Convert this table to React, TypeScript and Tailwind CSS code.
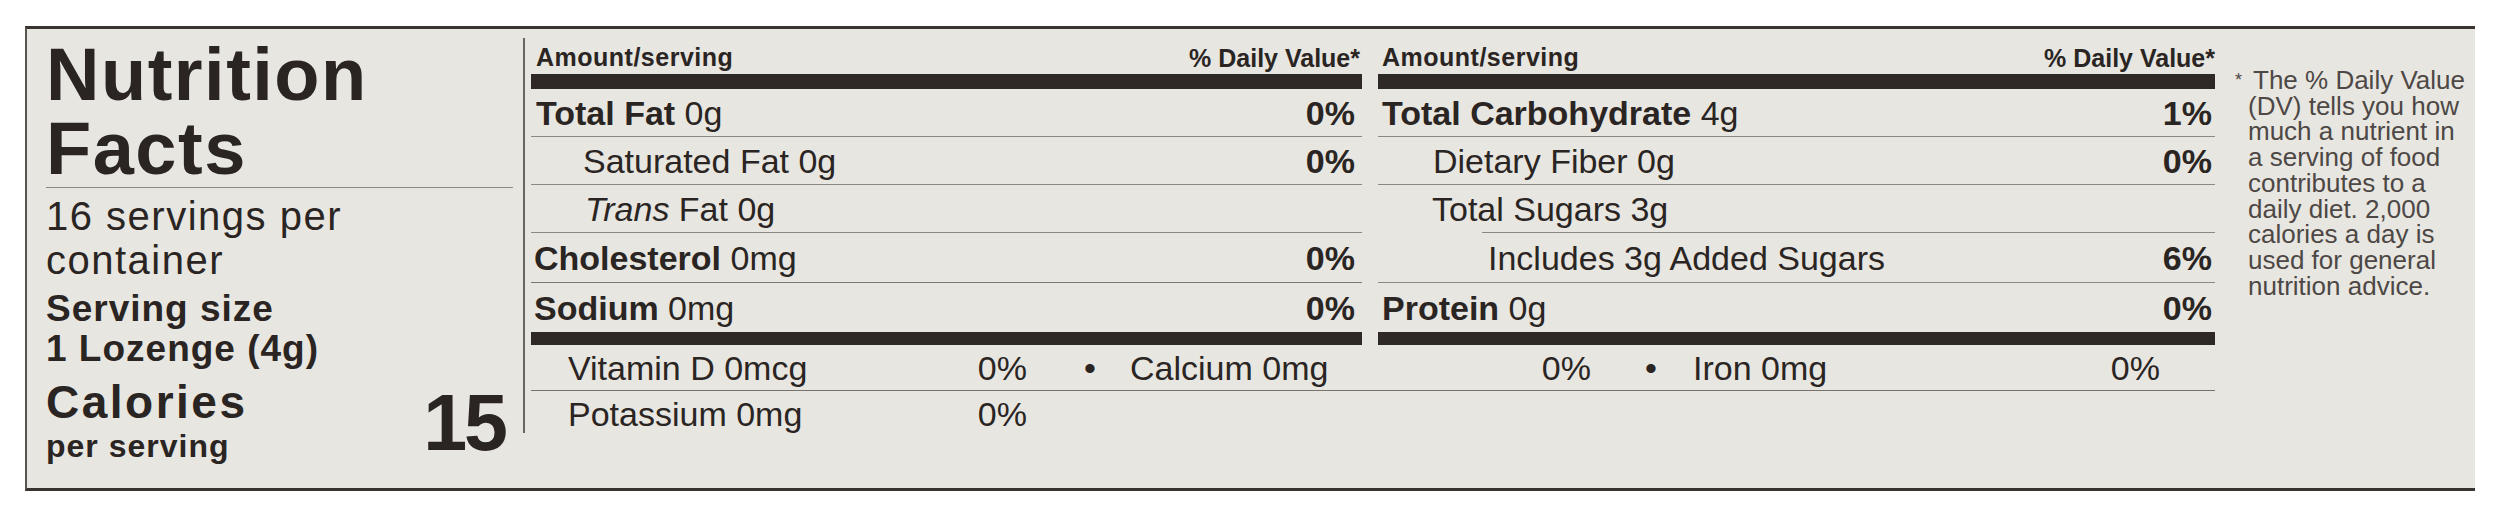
import React from "react";

type RowProps = {
  label: React.ReactNode;
  pct?: string;
  rowClass: string;
  textClass: string;
  sepClass?: string;
};

function Row({ label, pct, rowClass, textClass, sepClass }: RowProps) {
  return (
    <div className={"flex flex-col " + rowClass}>
      <div className={"flex-1 flex items-center justify-between text-[34px] leading-none " + textClass}>
        <span className="whitespace-nowrap">{label}</span>
        {pct ? <span className="font-bold">{pct}</span> : null}
      </div>
      {sepClass ? <div className={sepClass} /> : null}
    </div>
  );
}

export default function App() {
  return (
    <div className="w-[2500px] h-[522px] bg-white overflow-hidden font-['Liberation_Sans',Arial,sans-serif] text-[#2a2523]">
      <div className="ml-[25px] mt-[26px] w-[2450px] h-[465px] bg-[#e8e6e1] border-t-[3px] border-b-[3px] border-l-2 border-t-[#3a3431] border-b-[#3a3431] border-l-[#5a5450] flex">
        {/* Left panel */}
        <div className="w-[496px] shrink-0 pl-[19px] pr-[18px] flex flex-col">
          <div className="mt-[9px] text-[74px] font-bold leading-[74px] tracking-[1.5px]">
            Nutrition
            <br />
            Facts
          </div>
          <div className="mt-[1px] -mr-[8px] h-px bg-[#8d8883]" />
          <div className="mt-[6px] text-[40px] leading-[44px] tracking-[1.5px]">
            16 servings per
            <br />
            container
          </div>
          <div className="mt-[7px] text-[37px] font-bold leading-[40px] tracking-[1px]">
            Serving size
            <br />1 Lozenge (4g)
          </div>
          <div className="mt-[10px] flex justify-between items-start">
            <div>
              <div className="text-[46px] font-bold leading-[46px] tracking-[2.5px]">Calories</div>
              <div className="mt-[3px] text-[32px] font-bold leading-[36px] tracking-[1px]">per serving</div>
            </div>
            <div className="mt-[4px] text-[79px] font-bold leading-none tracking-[-3px]">15</div>
          </div>
        </div>

        {/* Divider */}
        <div className="w-[2px] shrink-0 mt-[9px] h-[395px] bg-[#6a6460]" />

        {/* Table */}
        <div className="ml-[6px] w-[1684px] shrink-0 flex flex-col">
          <div className="flex gap-[16px]">
            {/* Column 1 */}
            <div className="w-[831px] flex flex-col">
              <div className="h-[45px] flex items-end justify-between text-[25px] font-bold leading-none">
                <span className="pl-[5px] pb-[4px] tracking-[0.5px]">Amount/serving</span>
                <span className="pr-[2px] pb-[3px]">% Daily Value*</span>
              </div>
              <div className="h-[15px] bg-[#2e2826]" />
              <Row
                rowClass="h-[48px]"
                textClass="pl-[5px] pr-[7px]"
                label={<><b>Total Fat</b> 0g</>}
                pct="0%"
                sepClass="h-px bg-[#8d8883]"
              />
              <Row
                rowClass="h-[48px]"
                textClass="pl-[52px] pr-[7px]"
                label="Saturated Fat 0g"
                pct="0%"
                sepClass="h-px bg-[#8d8883]"
              />
              <Row
                rowClass="h-[48px]"
                textClass="pl-[54px] pr-[7px]"
                label={<><i>Trans</i> Fat 0g</>}
                sepClass="h-px bg-[#8d8883]"
              />
              <Row
                rowClass="h-[50px]"
                textClass="pl-[3px] pr-[7px]"
                label={<><b>Cholesterol</b> 0mg</>}
                pct="0%"
                sepClass="h-px bg-[#7d7874]"
              />
              <Row
                rowClass="h-[49px]"
                textClass="pl-[3px] pr-[7px]"
                label={<><b>Sodium</b> 0mg</>}
                pct="0%"
              />
              <div className="h-[13px] bg-[#2e2826]" />
            </div>

            {/* Column 2 */}
            <div className="w-[837px] flex flex-col">
              <div className="h-[45px] flex items-end justify-between text-[25px] font-bold leading-none">
                <span className="pl-[4px] pb-[4px] tracking-[0.5px]">Amount/serving</span>
                <span className="pb-[3px]">% Daily Value*</span>
              </div>
              <div className="h-[15px] bg-[#2e2826]" />
              <Row
                rowClass="h-[48px]"
                textClass="pl-[4px] pr-[3px]"
                label={<><b>Total Carbohydrate</b> 4g</>}
                pct="1%"
                sepClass="h-px bg-[#8d8883]"
              />
              <Row
                rowClass="h-[48px]"
                textClass="pl-[55px] pr-[3px]"
                label="Dietary Fiber 0g"
                pct="0%"
                sepClass="h-px bg-[#8d8883]"
              />
              <Row
                rowClass="h-[48px]"
                textClass="pl-[54px] pr-[3px]"
                label="Total Sugars 3g"
                sepClass="ml-[104px] h-px bg-[#8d8883]"
              />
              <Row
                rowClass="h-[50px]"
                textClass="pl-[110px] pr-[3px]"
                label="Includes 3g Added Sugars"
                pct="6%"
                sepClass="h-px bg-[#8d8883]"
              />
              <Row
                rowClass="h-[49px]"
                textClass="pl-[4px] pr-[3px]"
                label={<><b>Protein</b> 0g</>}
                pct="0%"
              />
              <div className="h-[13px] bg-[#2e2826]" />
            </div>
          </div>

          {/* Vitamins & minerals */}
          <div className="h-[46px] flex items-center border-b border-[#77726e] text-[34px] leading-none whitespace-nowrap">
            <div className="w-[496px] pl-[37px] flex justify-between">
              <span>Vitamin D 0mcg</span>
              <span>0%</span>
            </div>
            <div className="w-[103px] pl-[57px]">•</div>
            <div className="w-[461px] flex justify-between">
              <span>Calcium 0mg</span>
              <span>0%</span>
            </div>
            <div className="w-[102px] pl-[54px]">•</div>
            <div className="w-[467px] flex justify-between">
              <span>Iron 0mg</span>
              <span>0%</span>
            </div>
          </div>
          <div className="h-[45px] flex items-center text-[34px] leading-none whitespace-nowrap">
            <div className="w-[496px] pl-[37px] flex justify-between">
              <span>Potassium 0mg</span>
              <span>0%</span>
            </div>
          </div>
        </div>

        {/* Footnote */}
        <div className="ml-[33px] pt-[39px] text-[26px] leading-[25.7px] text-[#4d4845] whitespace-nowrap">
          <span className="text-[18px] -ml-[13px] mr-[11px] align-[3px]">*</span>The % Daily Value
          <br />
          (DV) tells you how
          <br />
          much a nutrient in
          <br />
          a serving of food
          <br />
          contributes to a
          <br />
          daily diet. 2,000
          <br />
          calories a day is
          <br />
          used for general
          <br />
          nutrition advice.
        </div>
      </div>
    </div>
  );
}
